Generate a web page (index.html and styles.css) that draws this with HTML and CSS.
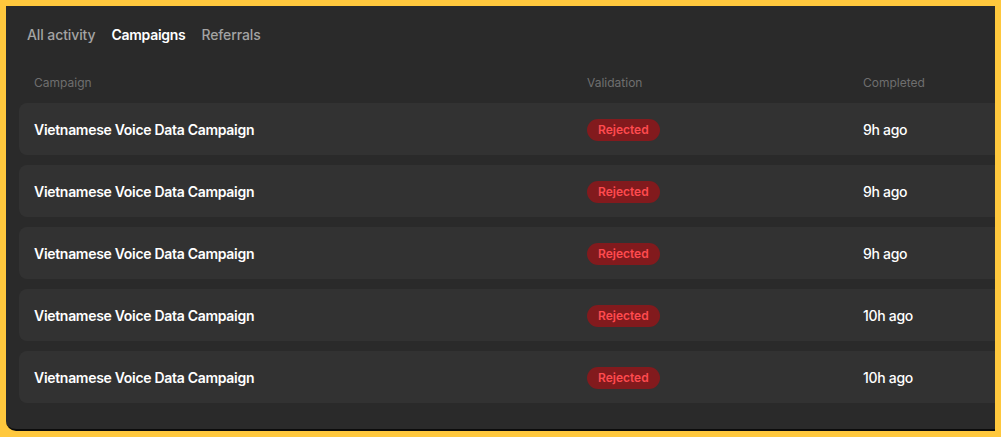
FILE: index.html
```html
<!DOCTYPE html>
<html lang="en">
<head>
<meta charset="utf-8">
<title>Activity</title>
<link rel="stylesheet" href="styles.css">
</head>
<body>
<div class="frame">
  <div class="panel">
    <nav class="tabs">
      <span class="tab">All activity</span>
      <span class="tab active">Campaigns</span>
      <span class="tab">Referrals</span>
    </nav>
    <div class="table">
      <div class="head">
        <div class="cell">Campaign</div>
        <div class="cell">Validation</div>
        <div class="cell">Completed</div>
      </div>
      <div class="rows">
        <div class="row">
          <div class="cell name">Vietnamese Voice Data Campaign</div>
          <div class="cell"><span class="badge">Rejected</span></div>
          <div class="cell time">9h ago</div>
        </div>
        <div class="row">
          <div class="cell name">Vietnamese Voice Data Campaign</div>
          <div class="cell"><span class="badge">Rejected</span></div>
          <div class="cell time">9h ago</div>
        </div>
        <div class="row">
          <div class="cell name">Vietnamese Voice Data Campaign</div>
          <div class="cell"><span class="badge">Rejected</span></div>
          <div class="cell time">9h ago</div>
        </div>
        <div class="row">
          <div class="cell name">Vietnamese Voice Data Campaign</div>
          <div class="cell"><span class="badge">Rejected</span></div>
          <div class="cell time">10h ago</div>
        </div>
        <div class="row">
          <div class="cell name">Vietnamese Voice Data Campaign</div>
          <div class="cell"><span class="badge">Rejected</span></div>
          <div class="cell time">10h ago</div>
        </div>
      </div>
    </div>
  </div>
</div>
</body>
</html>
```
FILE: styles.css
```css
* { box-sizing: border-box; }
html, body {
  margin: 0;
  padding: 0;
  background: #ffc83d;
  font-family: Inter, "Noto Sans", "Liberation Sans", sans-serif;
}
.frame {
  width: 1001px;
  height: 437px;
  padding: 6px;
}
.panel {
  height: 425px;
  background: #2a2a2a;
  border-bottom: 2px solid #0c0c0c;
  border-bottom-left-radius: 10px;
  overflow: hidden;
  padding: 0 0 0 13px;
}
.tabs {
  display: flex;
  gap: 16px;
  padding: 19px 0 0 8px;
  height: 56px;
}
.tab {
  font-size: 14px;
  font-weight: 500;
  color: #a3a3a3;
  line-height: 20px;
  letter-spacing: -0.1px;
}
.tab.active {
  color: #ffffff;
  font-weight: 600;
  letter-spacing: -0.3px;
}
.table {
  width: 1100px;
}
.head, .row {
  display: grid;
  grid-template-columns: 553px 276px 1fr;
  align-items: center;
}
.head {
  height: 41px;
  font-size: 12px;
  color: #6f6f6f;
  padding-bottom: 1px;
}
.cell {
  padding-left: 15px;
  white-space: nowrap;
}
.rows {
  display: flex;
  flex-direction: column;
  gap: 10px;
}
.row {
  height: 52px;
  background: #323232;
  border-radius: 8px;
  color: #ffffff;
}
.name {
  font-size: 14px;
  font-weight: 600;
  letter-spacing: -0.3px;
}
.time {
  font-size: 14px;
  font-weight: 500;
  letter-spacing: -0.3px;
}
.badge {
  display: inline-block;
  background: #821a1d;
  color: #ff4b4f;
  font-size: 12px;
  font-weight: 600;
  line-height: 22px;
  padding: 0 11px;
  border-radius: 11px;
}
```
